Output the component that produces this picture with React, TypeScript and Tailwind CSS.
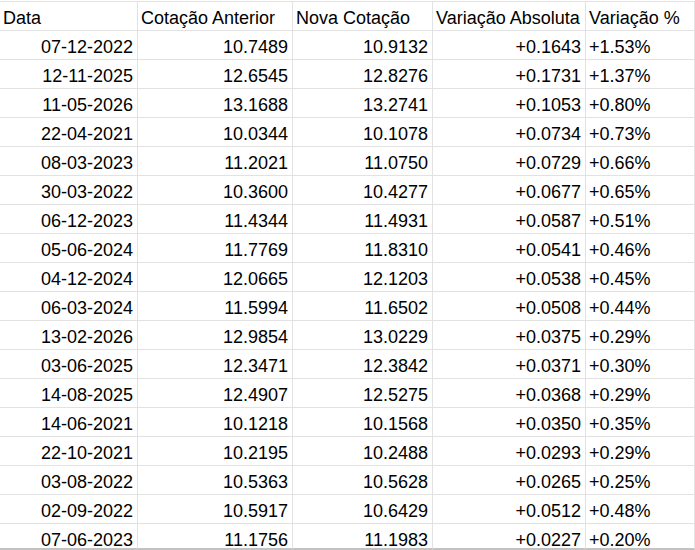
import React from 'react'

interface Row {
    data: string
    anterior: string
    nova: string
    absoluta: string
    pct: string
}

const rows: Row[] = [
    { data: '07-12-2022', anterior: '10.7489', nova: '10.9132', absoluta: '+0.1643', pct: '+1.53%' },
    { data: '12-11-2025', anterior: '12.6545', nova: '12.8276', absoluta: '+0.1731', pct: '+1.37%' },
    { data: '11-05-2026', anterior: '13.1688', nova: '13.2741', absoluta: '+0.1053', pct: '+0.80%' },
    { data: '22-04-2021', anterior: '10.0344', nova: '10.1078', absoluta: '+0.0734', pct: '+0.73%' },
    { data: '08-03-2023', anterior: '11.2021', nova: '11.0750', absoluta: '+0.0729', pct: '+0.66%' },
    { data: '30-03-2022', anterior: '10.3600', nova: '10.4277', absoluta: '+0.0677', pct: '+0.65%' },
    { data: '06-12-2023', anterior: '11.4344', nova: '11.4931', absoluta: '+0.0587', pct: '+0.51%' },
    { data: '05-06-2024', anterior: '11.7769', nova: '11.8310', absoluta: '+0.0541', pct: '+0.46%' },
    { data: '04-12-2024', anterior: '12.0665', nova: '12.1203', absoluta: '+0.0538', pct: '+0.45%' },
    { data: '06-03-2024', anterior: '11.5994', nova: '11.6502', absoluta: '+0.0508', pct: '+0.44%' },
    { data: '13-02-2026', anterior: '12.9854', nova: '13.0229', absoluta: '+0.0375', pct: '+0.29%' },
    { data: '03-06-2025', anterior: '12.3471', nova: '12.3842', absoluta: '+0.0371', pct: '+0.30%' },
    { data: '14-08-2025', anterior: '12.4907', nova: '12.5275', absoluta: '+0.0368', pct: '+0.29%' },
    { data: '14-06-2021', anterior: '10.1218', nova: '10.1568', absoluta: '+0.0350', pct: '+0.35%' },
    { data: '22-10-2021', anterior: '10.2195', nova: '10.2488', absoluta: '+0.0293', pct: '+0.29%' },
    { data: '03-08-2022', anterior: '10.5363', nova: '10.5628', absoluta: '+0.0265', pct: '+0.25%' },
    { data: '02-09-2022', anterior: '10.5917', nova: '10.6429', absoluta: '+0.0512', pct: '+0.48%' },
    { data: '07-06-2023', anterior: '11.1756', nova: '11.1983', absoluta: '+0.0227', pct: '+0.20%' },
]

const headers = ['Data', 'Cotação Anterior', 'Nova Cotação', 'Variação Absoluta', 'Variação %']

function Cell({ children, right, last }: { children: React.ReactNode; right?: boolean; last?: boolean }) {
    return (
        <div
            className={`overflow-hidden whitespace-nowrap border-r border-[#e2e2e2] pt-[4px] leading-[24px] ${
                last ? 'h-[26px] border-b-2 border-b-[#c2c2c2]' : 'h-[29px] border-b'
            } ${right ? 'pr-[4px] text-right' : 'pl-[3px] text-left'}`}
        >
            {children}
        </div>
    )
}

export default function App() {
    return (
        <div
            className="h-[550px] w-[695px] overflow-hidden bg-white pt-[1px] text-[18px] text-black"
            style={{ fontFamily: '"Liberation Sans", Arial, sans-serif' }}
        >
            <div className="grid grid-cols-[138px_155px_140px_153px_109px] border-t border-[#e2e2e2]">
                {headers.map((h) => (
                    <Cell key={h}>{h}</Cell>
                ))}
                {rows.map((r, i) => {
                    const last = i === rows.length - 1
                    return (
                        <React.Fragment key={r.data + i}>
                            <Cell right last={last}>{r.data}</Cell>
                            <Cell right last={last}>{r.anterior}</Cell>
                            <Cell right last={last}>{r.nova}</Cell>
                            <Cell right last={last}>{r.absoluta}</Cell>
                            <Cell last={last}>{r.pct}</Cell>
                        </React.Fragment>
                    )
                })}
            </div>
        </div>
    )
}
